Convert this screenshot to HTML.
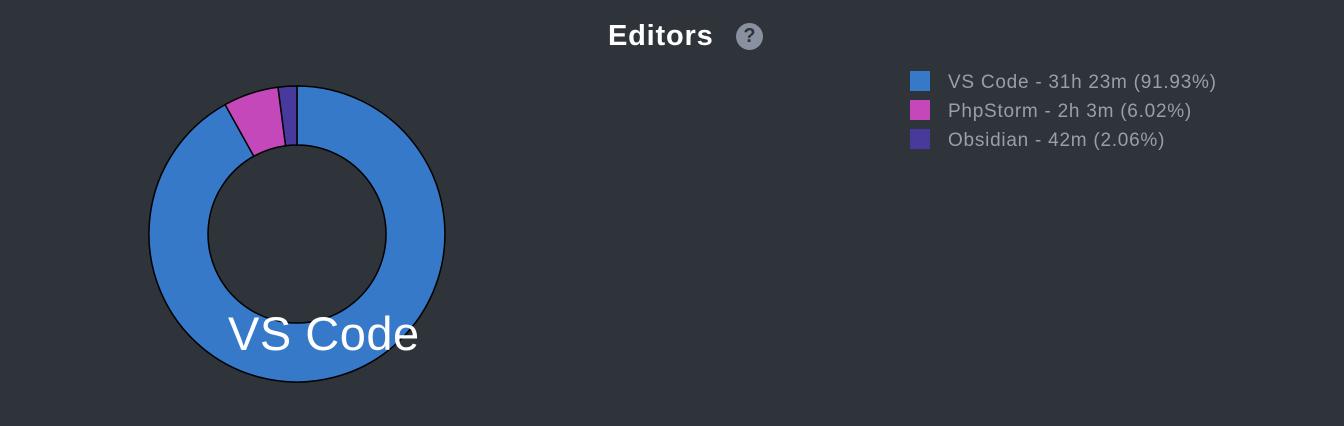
<!DOCTYPE html>
<html><head><style>
html,body{margin:0;padding:0;background:#2f333a;width:1344px;height:426px;overflow:hidden;font-family:"Liberation Sans",sans-serif}
.t{position:absolute;left:608px;top:20px;font-size:29px;font-weight:bold;color:#fff;letter-spacing:0.8px}
.q{position:absolute;left:736px;top:23px;width:27px;height:27px;border-radius:50%;background:#8990a0;color:#2f333a;font-weight:bold;font-size:20px;text-align:center;line-height:27px}
.lg{position:absolute;left:910px;font-size:19px;color:#9a9ea6}
.lg i{position:absolute;left:0;top:0;width:20px;height:20px}
.lg span{position:absolute;left:38px;top:1px;white-space:nowrap;letter-spacing:0.75px}
</style></head><body>
<div class="t">Editors</div>
<div class="q">?</div>
<div class="lg" style="top:71px"><i style="background:#3779c9"></i><span>VS Code - 31h 23m (91.93%)</span></div>
<div class="lg" style="top:100px"><i style="background:#c548ba"></i><span>PhpStorm - 2h 3m (6.02%)</span></div>
<div class="lg" style="top:129px"><i style="background:#473a9c"></i><span>Obsidian - 42m (2.06%)</span></div>
<svg width="1344" height="426" style="position:absolute;left:0;top:0">
<g stroke="#000" stroke-width="1.5">
<path fill="#3779c9" d="M297,86 A148,148 0 1 1 225.1,104.6 L253.8,156.2 A89,89 0 1 0 297,145 Z"/>
<path fill="#c548ba" d="M225.1,104.6 A148,148 0 0 1 278,87.2 L285.6,145.7 A89,89 0 0 0 253.8,156.2 Z"/>
<path fill="#473a9c" d="M278,87.2 A148,148 0 0 1 297,86 L297,145 A89,89 0 0 0 285.6,145.7 Z"/>
</g>
<text x="228" y="350" fill="#fff" font-size="47" letter-spacing="0.5" font-family="Liberation Sans, sans-serif">VS Code</text>
</svg>
</body></html>
